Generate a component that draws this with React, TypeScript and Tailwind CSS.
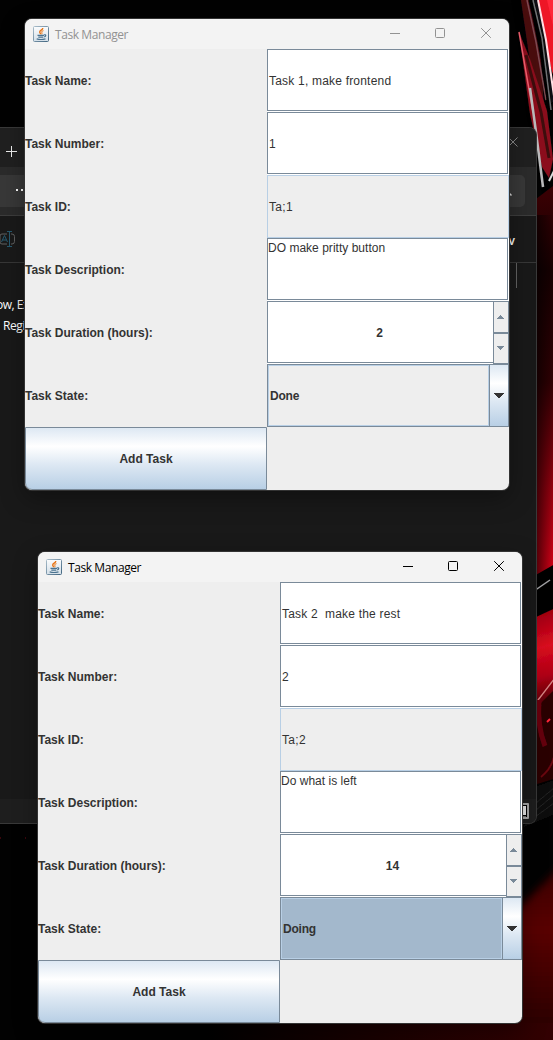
import React from "react";

type TaskForm = {
  name: string;
  number: string;
  id: string;
  description: string;
  duration: string;
  state: string;
  focused?: boolean;
};

const GRADIENT =
  "bg-[linear-gradient(180deg,#dde8f3_0%,#ffffff_30%,#dde8f3_60%,#b8cfe5_100%)]";

function JavaIcon() {
  return (
    <svg className="h-4 w-4 shrink-0" viewBox="0 0 16 16" fill="none">
      <defs>
        <linearGradient id="cup-tile" x1="0" y1="0" x2="0" y2="1">
          <stop offset="0" stopColor="#fbfcfd" />
          <stop offset="1" stopColor="#d3dfe8" />
        </linearGradient>
        <linearGradient id="cup-edge" x1="0" y1="0" x2="1" y2="1">
          <stop offset="0" stopColor="#a9bdca" />
          <stop offset="1" stopColor="#426681" />
        </linearGradient>
      </defs>
      <rect x="0.5" y="0.5" width="15" height="15" rx="1" fill="url(#cup-tile)" stroke="url(#cup-edge)" />
      <path d="M9.800 2C9.900 4 6.400 4.300 6.700 6.100c.1.8.9 1.200 1 2.200" stroke="#e87518" strokeWidth="1.400" />
      <path d="M10.500 4.600C8.300 5.400 8.500 6.200 9 6.800c.3.5 0 1-.5 1.400" stroke="#ee9140" strokeWidth="1.100" />
      <path d="M4.500 9.400h6.500M5.300 11.200h5M11 8.800c2.300-.5 2.300 1.700.2 2.100M3.700 12.900c2.300.7 6.500.6 8.800 0" stroke="#4b7390" strokeWidth="1.200" />
    </svg>
  );
}

function TitleBar({ active }: { active: boolean }) {
  const tone = active ? "text-black" : "text-[#929292]";
  return (
    <div className={`flex h-[30px] items-center bg-[#f3f3f3] pl-2 ${tone}`}>
      <JavaIcon />
      <span className="ml-[6px] grow whitespace-nowrap pt-px font-['Open_Sans','Noto_Sans',sans-serif] text-[12px] leading-4 tracking-[-0.42px]">
        Task Manager
      </span>
      <svg className="h-[30px] w-[138px]" viewBox="0 0 138 30" fill="none" stroke="currentColor">
        <path d="M19 14.500h10" />
        <rect x="64.500" y="9.500" width="9" height="9" rx="1" />
        <path d="M110.200 9.200l9.600 9.600M119.800 9.200l-9.600 9.600" />
      </svg>
    </div>
  );
}

function Label({ children }: { children: React.ReactNode }) {
  return (
    <div className="flex h-[63px] items-center whitespace-nowrap text-[12px] font-bold">
      {children}
    </div>
  );
}

function Field({ children, top = false }: { children: React.ReactNode; top?: boolean }) {
  return (
    <div className="h-[63px] bg-white pr-px pb-px">
      <div
        className={`flex h-full whitespace-pre border border-[#7a8a99] text-[12px] ${
          top ? "items-start leading-[19px] tracking-[0.02px]" : "items-center pt-0.5 pl-px tracking-[0.2px]"
        }`}
      >
        {children}
      </div>
    </div>
  );
}

function Spinner({ value }: { value: string }) {
  return (
    <div className="flex h-[63px] bg-white">
      <div className="mb-px flex grow items-center justify-center border border-r-0 border-[#7a8a99] pt-0.5 pr-0.5 text-[12px] font-bold">
        {value}
      </div>
      <div className="flex w-4 flex-col border border-[#7a8a99] bg-[#eeeeee]">
        <div className="flex h-[31px] items-center justify-center border-b border-[#7a8a99] pr-px">
          <svg className="h-1 w-[7px]" viewBox="0 0 7 4" shapeRendering="crispEdges">
            <path d="M3 0h1v1h1v1h1v1h1v1H0V3h1V2h1V1h1z" fill="#7a8a99" />
          </svg>
        </div>
        <div className="flex grow items-center justify-center border-t border-[#7a8a99] pr-px pb-px">
          <svg className="h-1 w-[7px]" viewBox="0 0 7 4" shapeRendering="crispEdges">
            <path d="M0 0h7v1H6v1H5v1H4v1H3V3H2V2H1V1H0z" fill="#7a8a99" />
          </svg>
        </div>
      </div>
    </div>
  );
}

function Combo({ value, focused }: { value: string; focused?: boolean }) {
  return (
    <div className="flex h-[63px] border border-[#7a8a99]">
      <div
        className={`flex grow items-center border border-[#b8cfe5] pl-px text-[12px] font-bold tracking-[-0.2px] ${
          focused ? "bg-[#a3b8cc]" : "bg-[#eeeeee]"
        }`}
      >
        {value}
      </div>
      <div className={`flex w-[19px] items-center justify-center border-l border-[#7a8a99] ${GRADIENT}`}>
        <svg className="h-[5px] w-[10px]" viewBox="0 0 10 5" shapeRendering="crispEdges">
          <path d="M0 0h10v1H9v1H8v1H7v1H6v1H4V4H3V3H2V2H1V1H0z" fill="#333333" />
        </svg>
      </div>
    </div>
  );
}

function TaskWindow({ task, active, place }: { task: TaskForm; active: boolean; place: string }) {
  return (
    <section
      className={`absolute w-[484px] overflow-hidden rounded-[7px] bg-[#eeeeee] text-[#333333] ${place}`}
    >
      <TitleBar active={active} />
      <div className="grid grid-cols-2 font-['Liberation_Sans',Arial,sans-serif]">
        <Label>Task Name:</Label>
        <Field>{task.name}</Field>
        <Label>Task Number:</Label>
        <Field>{task.number}</Field>
        <Label>Task ID:</Label>
        <div className="flex h-[63px] items-center border border-[#b8cfe5] pl-px text-[12px] tracking-[0.3px]">
          {task.id}
        </div>
        <Label>Task Description:</Label>
        <Field top>{task.description}</Field>
        <Label>Task Duration (hours):</Label>
        <Spinner value={task.duration} />
        <Label>Task State:</Label>
        <Combo value={task.state} focused={task.focused} />
        <button
          className={`h-[63px] rounded-bl-[7px] border border-[#7a8a99] text-[12px] font-bold ${GRADIENT}`}
        >
          Add Task
        </button>
      </div>
    </section>
  );
}

function Wallpaper() {
  return (
    <svg className="absolute inset-0 h-[1040px] w-[553px]" viewBox="0 0 553 1040">
      <defs>
        <linearGradient id="wp-glow" x1="0" y1="190" x2="0" y2="590" gradientUnits="userSpaceOnUse">
          <stop offset="0" stopColor="#3a0003" />
          <stop offset="0.200" stopColor="#160001" />
          <stop offset="0.480" stopColor="#300003" />
          <stop offset="0.750" stopColor="#95000e" />
          <stop offset="1" stopColor="#e00018" />
        </linearGradient>
        <linearGradient id="wp-edge" x1="536" y1="0" x2="553" y2="0" gradientUnits="userSpaceOnUse">
          <stop offset="0" stopColor="#000" stopOpacity="0.600" />
          <stop offset="1" stopColor="#000" stopOpacity="0" />
        </linearGradient>
        <linearGradient id="wp-panel" x1="536" y1="615" x2="560" y2="705" gradientUnits="userSpaceOnUse">
          <stop offset="0" stopColor="#a00010" />
          <stop offset="0.350" stopColor="#d90a20" />
          <stop offset="0.650" stopColor="#b00014" />
          <stop offset="1" stopColor="#400005" />
        </linearGradient>
        <linearGradient id="wp-floor" x1="0" y1="870" x2="0" y2="1040" gradientUnits="userSpaceOnUse">
          <stop offset="0" stopColor="#3c0002" />
          <stop offset="0.350" stopColor="#5a0003" />
          <stop offset="1" stopColor="#250001" />
        </linearGradient>
        <linearGradient id="wp-bottom" x1="200" y1="0" x2="553" y2="0" gradientUnits="userSpaceOnUse">
          <stop offset="0" stopColor="#000" />
          <stop offset="1" stopColor="#330002" />
        </linearGradient>
        <filter id="wp-soft">
          <feGaussianBlur stdDeviation="0.600" />
        </filter>
        <filter id="wp-softer" x="-50%" y="-10%" width="200%" height="120%">
          <feGaussianBlur stdDeviation="4" />
        </filter>
      </defs>
      <rect width="553" height="1040" fill="#020202" />
      <g filter="url(#wp-soft)">
        <path d="M511 0h48v190l-17 5-16-82-8-70z" fill="#060606" />
        <path d="M521 0h8l12 60 3 48-14-46z" fill="#4a0910" />
        <path d="M538 0h22v96l-9-28z" fill="#ee1428" />
        <path d="M547 0h13v42l-6-12z" fill="#ff2638" />
        <path d="M527 0l9 42 10 58" stroke="#7c4a50" strokeWidth="1.500" fill="none" />
        <path d="M530 0l10 41 9 66" stroke="#050506" strokeWidth="3" fill="none" />
        <path d="M533 0l9 38 9 72" stroke="#707275" strokeWidth="1.500" fill="none" />
        <path d="M535.500 0l10 42 7 60" stroke="#101012" strokeWidth="2.500" fill="none" />
        <path d="M538 0l8 40 8 56" stroke="#ffdfe4" strokeWidth="2" fill="none" />
        <path d="M519 32l11 27 17 52 6 48-4 19-7-11-12-53z" fill="#8b101d" />
        <path d="M526 55l15 57 8 46" stroke="#3e070c" strokeWidth="3" fill="none" />
        <path d="M519 32l8 46 6 34" stroke="#ef5e6e" strokeWidth="1.500" fill="none" />
        <path d="M530 88l6 44 7 55" stroke="#bababb" strokeWidth="2.500" fill="none" />
        <path d="M549 181l5-10" stroke="#ddd" strokeWidth="2" />
      </g>
      <path d="M536 199l17-13v390l-17 10z" fill="url(#wp-glow)" />
      <path d="M536 215h17v360h-17z" fill="url(#wp-edge)" />
      <g filter="url(#wp-soft)">
        <path d="M534 576l26-15v56l-26 12z" fill="#050505" />
        <path d="M534 591l16-11" stroke="#a5a5a8" strokeWidth="1.500" />
        <path d="M534 618l26-12v92l-26 12z" fill="url(#wp-panel)" />
        <path d="M535 704l20-26" stroke="#d58684" strokeWidth="1.300" />
        <path d="M534 710l26-26v93l-26 8z" fill="#2a0003" />
        <path d="M539 700q-2 26 6 46" stroke="#65060f" strokeWidth="5" fill="none" />
        <path d="M541 777q10-8 13-20" stroke="#68070f" strokeWidth="2" fill="none" />
        <path d="M547 722l3-3" stroke="#ff2638" strokeWidth="2" />
        <path d="M532 788l28-10v34l-36 15z" fill="#0d0d0d" />
        <path d="M536 803l18-15M536 810l18-15M531 820l23-17" stroke="#222" />
      </g>
      <path d="M505 922l60-60v190h-60z" fill="url(#wp-floor)" filter="url(#wp-softer)" />
      <rect x="200" y="1023" width="353" height="17" fill="url(#wp-bottom)" />
      <path d="M0 838h1M25 838h1" stroke="#730b16" />
    </svg>
  );
}

function EditorWindow() {
  return (
    <section className="absolute top-[127px] left-0 flex h-[697px] w-[537px] flex-col overflow-hidden rounded-r-[8px] border-y border-r border-[#393939] bg-[#191919] font-['Open_Sans','Noto_Sans',sans-serif] text-white">
      <div className="flex h-[39px] items-start justify-between bg-[#202020]">
        <svg className="h-[39px] w-6" viewBox="0 0 24 39" stroke="#eeeeee">
          <path d="M6 23.500h11M11.500 18v11" />
        </svg>
        <svg className="h-[39px] w-8" viewBox="0 0 32 39" stroke="#888888">
          <path d="M4.500 9.500l9 9M13.500 9.500l-9 9" />
        </svg>
      </div>
      <div className="flex h-[49px] items-center border-b border-[#3d3d3d] bg-[#2b2b2b] pr-[11px]">
        <div className="flex h-8 grow items-center justify-between rounded-r-[5px] bg-[#383838]">
          <svg className="h-8 w-6" viewBox="0 0 24 32" fill="#ffffff">
            <path d="M16 14h2v2h-2zM21 14h2v2h-2z" />
          </svg>
          <svg className="h-8 w-5" viewBox="0 0 20 32" stroke="#dddddd" strokeWidth="1.500">
            <path d="M2 16l4.500 4.500" />
          </svg>
        </div>
      </div>
      <div className="flex h-[47px] items-center justify-between border-b border-[#373737] bg-[#1a1a1a] pr-[21px]">
        <svg className="h-5 w-5" viewBox="0 0 20 20" fill="none">
          <path d="M7 5H2Q0 5 0 7v6q0 2 2 2h5M11 5h1q2.500 0 2.500 2.500v5q0 2.500-2.500 2.500h-1" stroke="#606060" />
          <path d="M1.500 13L4.500 6.500 7.500 13M2.500 11h4M9.500 3v14M7 2.500h5M7 17.500h5" stroke="#285a70" />
        </svg>
        <span className="pt-1 text-[12px] leading-4 font-semibold">v</span>
      </div>
      <div className="flex grow justify-between pr-[19px] text-[12px] leading-[21px]">
        <div className="w-6 pt-[31px] whitespace-nowrap">
          <div className="-ml-[4px] tracking-[-0.5px]">ow, Ex</div>
          <div className="pl-[3px] tracking-[-0.4px]">Regi</div>
        </div>
        <div className="h-[25px] w-px bg-[#626262]" />
      </div>
      <div className="flex h-6 items-start justify-end bg-[#1e1e1e] pr-[7px]">
        <svg className="mt-1 h-4 w-[14px]" viewBox="0 0 14 16">
          <rect width="14" height="16" rx="1" fill="#a9a9a9" />
          <path d="M1 2h11v12H1z" fill="#000" />
          <path d="M2 3h9v9H2zM2 13h9v0.500H2z" fill="#eee" />
        </svg>
      </div>
    </section>
  );
}

export default function App() {
  return (
    <main className="relative h-[1040px] w-[553px] overflow-hidden bg-black">
      <Wallpaper />
      <EditorWindow />
      <TaskWindow
        active={false}
        place="top-[19px] left-[25px] shadow-[0_0_0_1px_#333333,0_8px_24px_rgba(0,0,0,0.35)]"
        task={{
          name: "Task 1, make frontend",
          number: "1",
          id: "Ta;1",
          description: "DO make pritty button",
          duration: "2",
          state: "Done",
        }}
      />
      <TaskWindow
        active
        place="top-[552px] left-[38px] shadow-[0_0_0_1px_#333333,0_8px_24px_rgba(0,0,0,0.35)]"
        task={{
          name: "Task 2  make the rest",
          number: "2",
          id: "Ta;2",
          description: "Do what is left",
          duration: "14",
          state: "Doing",
          focused: true,
        }}
      />
    </main>
  );
}
